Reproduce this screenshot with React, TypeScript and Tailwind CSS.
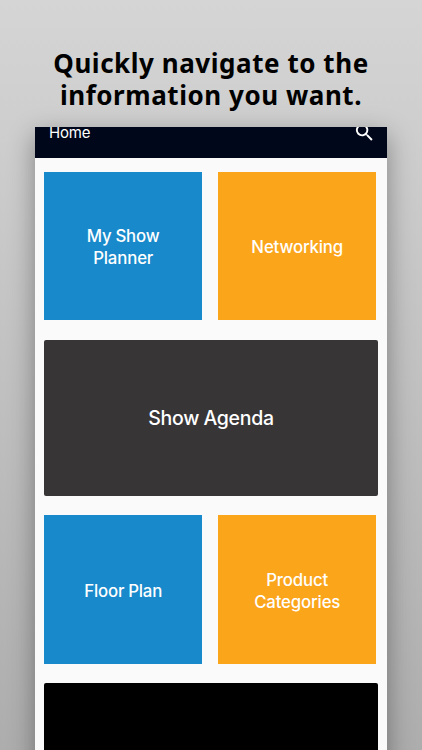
import type { ReactNode } from "react";

function Tile({ color, children }: { color: string; children: ReactNode }) {
  return (
    <div className={`flex h-[148.4px] items-center justify-center pt-[2px] text-center text-[16.8px] leading-[22px] font-medium tracking-[-0.15px] [word-spacing:-0.5px] ${color}`}>
      <span>{children}</span>
    </div>
  );
}

export default function App() {
  return (
    <main className="flex h-[750px] w-[422px] flex-col overflow-hidden bg-gradient-to-b from-[#d5d5d5] to-[#adadad]">
      <h1 className="h-[127.4px] shrink-0 pt-[47px] text-center font-['Noto_Sans',sans-serif] text-[26px] leading-8 font-bold tracking-[0.55px] whitespace-nowrap text-black">
        <span className="block">Quickly navigate to the</span>
        <span className="block">information you want.</span>
      </h1>
      <section className="ml-[35px] h-[720px] w-[352px] shrink-0 bg-[#fafafa] font-['Inter',sans-serif] text-white shadow-[0_8px_24px_rgba(0,0,0,0.36)]">
        <header className="flex h-[30.6px] items-start justify-between overflow-hidden bg-[#00071b] pr-[11px] pl-[14px]">
          <span className="-mt-[4px] text-[15px] leading-5 tracking-[-0.2px]">Home</span>
          <svg className="-mt-[6px] h-[23px] w-[23px]" viewBox="0 0 24 24" fill="currentColor">
            <path d="M15.5 14h-.79l-.28-.27A6.47 6.47 0 0 0 16 9.5 6.5 6.5 0 1 0 9.5 16c1.61 0 3.09-.59 4.23-1.57l.27.28v.79l5 4.99L20.49 19l-4.99-5zm-6 0C7.01 14 5 11.99 5 9.5S7.01 5 9.5 5 14 7.01 14 9.5 11.99 14 9.5 14z" />
          </svg>
        </header>
        <div className="flex w-[343px] flex-col pt-[14px] pl-[9px]">
          <div className="grid w-[332.4px] grid-cols-2 gap-[15.6px]">
            <Tile color="bg-[#188acb]">My Show<br />Planner</Tile>
            <Tile color="bg-[#fba51b]">Networking</Tile>
          </div>
          <div className="mt-[19.6px] flex h-[156px] items-center justify-center rounded-[2px] bg-[#383536] pt-[2px] text-[19.5px] font-medium tracking-[-0.3px] [word-spacing:-0.5px]">
            Show Agenda
          </div>
          <div className="mt-[19.4px] grid w-[332.4px] grid-cols-2 gap-[15.6px]">
            <Tile color="bg-[#188acb]">Floor Plan</Tile>
            <Tile color="bg-[#fba51b]">Product<br />Categories</Tile>
          </div>
          <div className="mt-[19.2px] h-[120px] rounded-[2px] bg-black" />
        </div>
      </section>
    </main>
  );
}
